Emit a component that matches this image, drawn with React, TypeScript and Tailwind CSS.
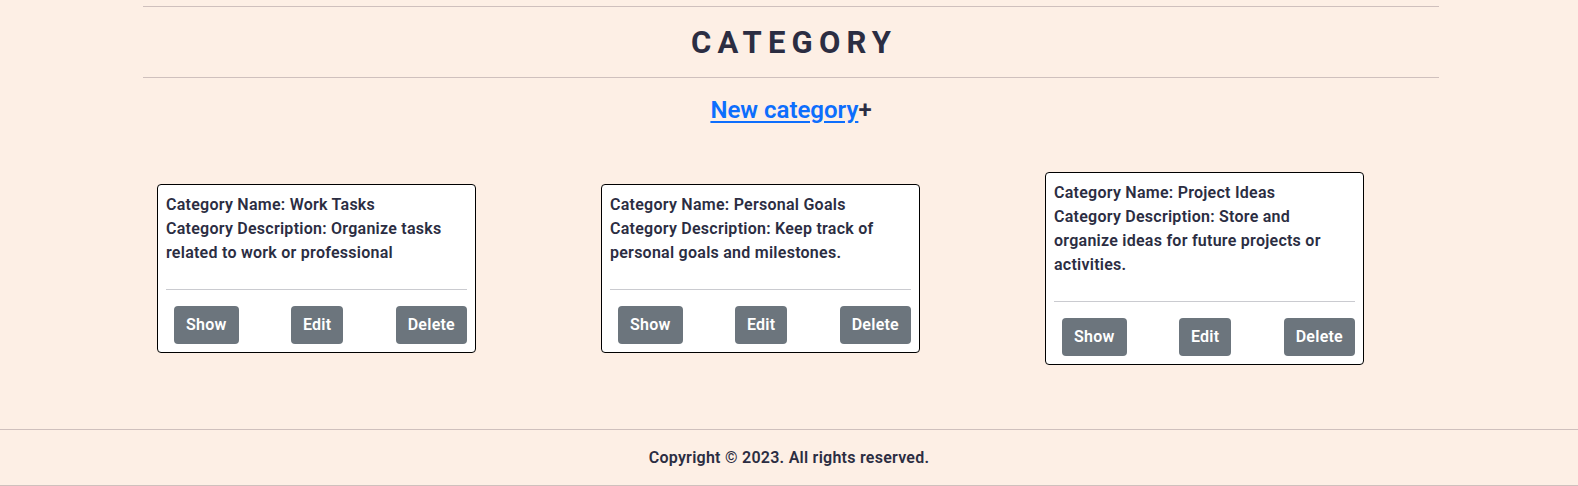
import React from 'react'

interface Category {
  id: number
  name: string
  description: string
}

const categories: Category[] = [
  { id: 1, name: 'Work Tasks', description: 'Organize tasks related to work or professional' },
  { id: 2, name: 'Personal Goals', description: 'Keep track of personal goals and milestones.' },
  { id: 3, name: 'Project Ideas', description: 'Store and organize ideas for future projects or activities.' },
]

const CategoryCard = ({ category }: { category: Category }) => (
  <div className="w-[319px] bg-white border border-black rounded p-2">
    <div className="text-[16px] leading-6 font-semibold text-[#2b2d42] mb-6">
      <div>Category Name: {category.name}</div>
      <div>Category Description: {category.description}</div>
    </div>
    <hr className="mb-4 border-0 border-t border-[#cacbd0]" />
    <div className="flex justify-between pl-2">
      {['Show', 'Edit', 'Delete'].map(label => (
        <button
          key={label}
          className="h-[38px] px-3 rounded bg-[#6c757d] text-white text-[16px] font-semibold"
        >
          {label}
        </button>
      ))}
    </div>
  </div>
)

export default function App() {
  return (
    <div
      className="min-h-screen bg-[#fdefe5] text-[#2b2d42] tracking-[0.016em]"
      style={{ fontFamily: 'Roboto, "Noto Sans", sans-serif' }}
    >
      <div className="w-[1296px] ml-[143px] pt-[6px]">
        <div className="h-[72px] flex items-center justify-center border-y border-[#cfc0bd]">
          <h1 className="text-[31px] font-bold tracking-[0.2em] pl-[0.2em] leading-none">CATEGORY</h1>
        </div>

        <div className="mt-[14px] h-9 flex items-center justify-center text-[24px] font-semibold tracking-normal">
          <a href="#" className="text-[#0d6efd] underline underline-offset-[3px]">New category</a>
          <span>+</span>
        </div>

        <div className="mt-[44px] h-[192px] flex items-center gap-[125px] pl-[14px]">
          {categories.map(c => (
            <CategoryCard key={c.id} category={c} />
          ))}
        </div>
      </div>

      <footer className="mt-[65px] h-[57px] flex items-center justify-center border-y border-[#cfc0bd]">
        <p className="text-[16px] font-semibold">Copyright © 2023. All rights reserved.</p>
      </footer>
    </div>
  )
}
